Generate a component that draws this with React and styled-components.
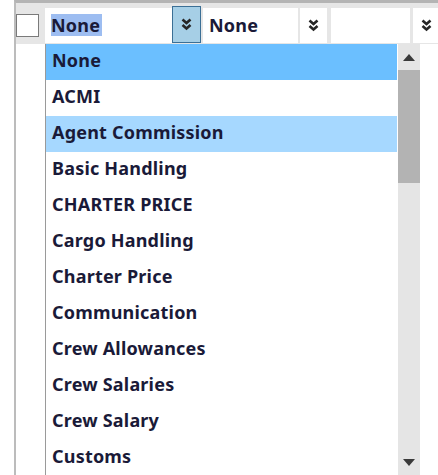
import React from 'react';
import styled, { createGlobalStyle } from 'styled-components';

const GlobalStyle = createGlobalStyle`
  body {
    margin: 0;
    background: #ffffff;
    font-family: "Noto Sans", "Open Sans", sans-serif;
  }
`;

// Frame with the grid's top and left rules
const Frame = styled.div`
  margin-left: 14px;
  height: 472px;
  border-left: 2px solid #bcbcbc;
  border-top: 3px solid #b4b4b4;
  overflow: hidden;
`;

const HeaderBar = styled.div`
  height: 40px;
  padding-bottom: 1px;
  background: #e6e6e6;
  display: flex;
  align-items: flex-end;
`;

const Checkbox = styled.div`
  width: 21px;
  height: 21px;
  margin-bottom: 6px;
  margin-right: 6px;
  border: 1px solid #7a7a7a;
  background: #ffffff;
  flex-shrink: 0;
`;

const Field = styled.div`
  width: ${({ $w }) => $w}px;
  height: 35px;
  background: #ffffff;
  display: flex;
  align-items: center;
  padding: 0 0 2px 6px;
  box-sizing: border-box;
  font-weight: 700;
  font-size: 18px;
  letter-spacing: 0.2px;
  color: #1a1a38;
  margin-right: ${({ $gap }) => $gap || 0}px;
  flex-shrink: 0;
`;

const Selected = styled.span`
  background: #9dbdf1;
  padding: 0 2px 0 0;
  line-height: 22px;
`;

const DropButton = styled.div`
  width: ${({ $w }) => $w}px;
  height: ${({ $active }) => ($active ? 37 : 35)}px;
  box-sizing: border-box;
  background: ${({ $active }) => ($active ? '#a6cfe6' : '#ffffff')};
  border: ${({ $active }) => ($active ? '1.5px solid #3b6f95' : 'none')};
  display: flex;
  align-items: center;
  justify-content: center;
  margin-right: ${({ $gap }) => $gap || 0}px;
  flex-shrink: 0;
  color: #262626;
`;

const Body = styled.div`
  display: flex;
  height: 431px;
`;

const Gutter = styled.div`
  width: 29px;
  flex-shrink: 0;
`;

const Popup = styled.div`
  display: flex;
  border-left: 1.5px solid #9a9a9a;
  height: 100%;
`;

const List = styled.div`
  width: 351px;
  margin-right: 1px;
`;

const Item = styled.div`
  height: 36px;
  display: flex;
  align-items: center;
  padding: 0 0 4px 6px;
  box-sizing: border-box;
  font-weight: 700;
  font-size: 18px;
  letter-spacing: 0.2px;
  color: #1a1a38;
  background: ${({ $state }) =>
    $state === 'current' ? '#6bbfff' : $state === 'hover' ? '#a6d8ff' : '#ffffff'};
  white-space: nowrap;
`;

const ScrollBar = styled.div`
  width: 22px;
  background: #e5e5e5;
  display: flex;
  flex-direction: column;
`;

const ArrowBox = styled.div`
  height: 26px;
  display: flex;
  align-items: center;
  justify-content: center;
  flex-shrink: 0;
`;

const Thumb = styled.div`
  height: 113px;
  background: #b3b3b3;
`;

const Track = styled.div`
  flex: 1;
`;

function DoubleChevron() {
  return (
    <svg width="11" height="13" viewBox="0 0 11 13">
      <path d="M1.5 1.5 L5.5 5 L9.5 1.5" fill="none" stroke="currentColor" strokeWidth="2.6" />
      <path d="M1.5 7 L5.5 10.5 L9.5 7" fill="none" stroke="currentColor" strokeWidth="2.6" />
    </svg>
  );
}

function Arrow({ up }) {
  return (
    <svg width="12" height="7" viewBox="0 0 12 7">
      <path d={up ? 'M0 7 L6 0 L12 7 Z' : 'M0 0 L12 0 L6 7 Z'} fill="#3a3a3a" />
    </svg>
  );
}

const options = [
  'None',
  'ACMI',
  'Agent Commission',
  'Basic Handling',
  'CHARTER PRICE',
  'Cargo Handling',
  'Charter Price',
  'Communication',
  'Crew Allowances',
  'Crew Salaries',
  'Crew Salary',
  'Customs',
];

export default function App() {
  return (
    <>
      <GlobalStyle />
      <Frame>
        <HeaderBar>
          <Checkbox />
          <Field $w={127}>
            <Selected>None</Selected>
          </Field>
          <DropButton $w={29} $active $gap={2}>
            <DoubleChevron />
          </DropButton>
          <Field $w={95} $gap={2}>None</Field>
          <DropButton $w={27} $gap={4}>
            <DoubleChevron />
          </DropButton>
          <Field $w={79} $gap={3} />
          <DropButton $w={26}>
            <DoubleChevron />
          </DropButton>
        </HeaderBar>
        <Body>
          <Gutter />
          <Popup>
            <List>
              {options.map((o, i) => (
                <Item key={o} $state={i === 0 ? 'current' : i === 2 ? 'hover' : ''}>
                  {o}
                </Item>
              ))}
            </List>
            <ScrollBar>
              <ArrowBox>
                <Arrow up />
              </ArrowBox>
              <Thumb />
              <Track />
              <ArrowBox>
                <Arrow />
              </ArrowBox>
            </ScrollBar>
          </Popup>
        </Body>
      </Frame>
    </>
  );
}
